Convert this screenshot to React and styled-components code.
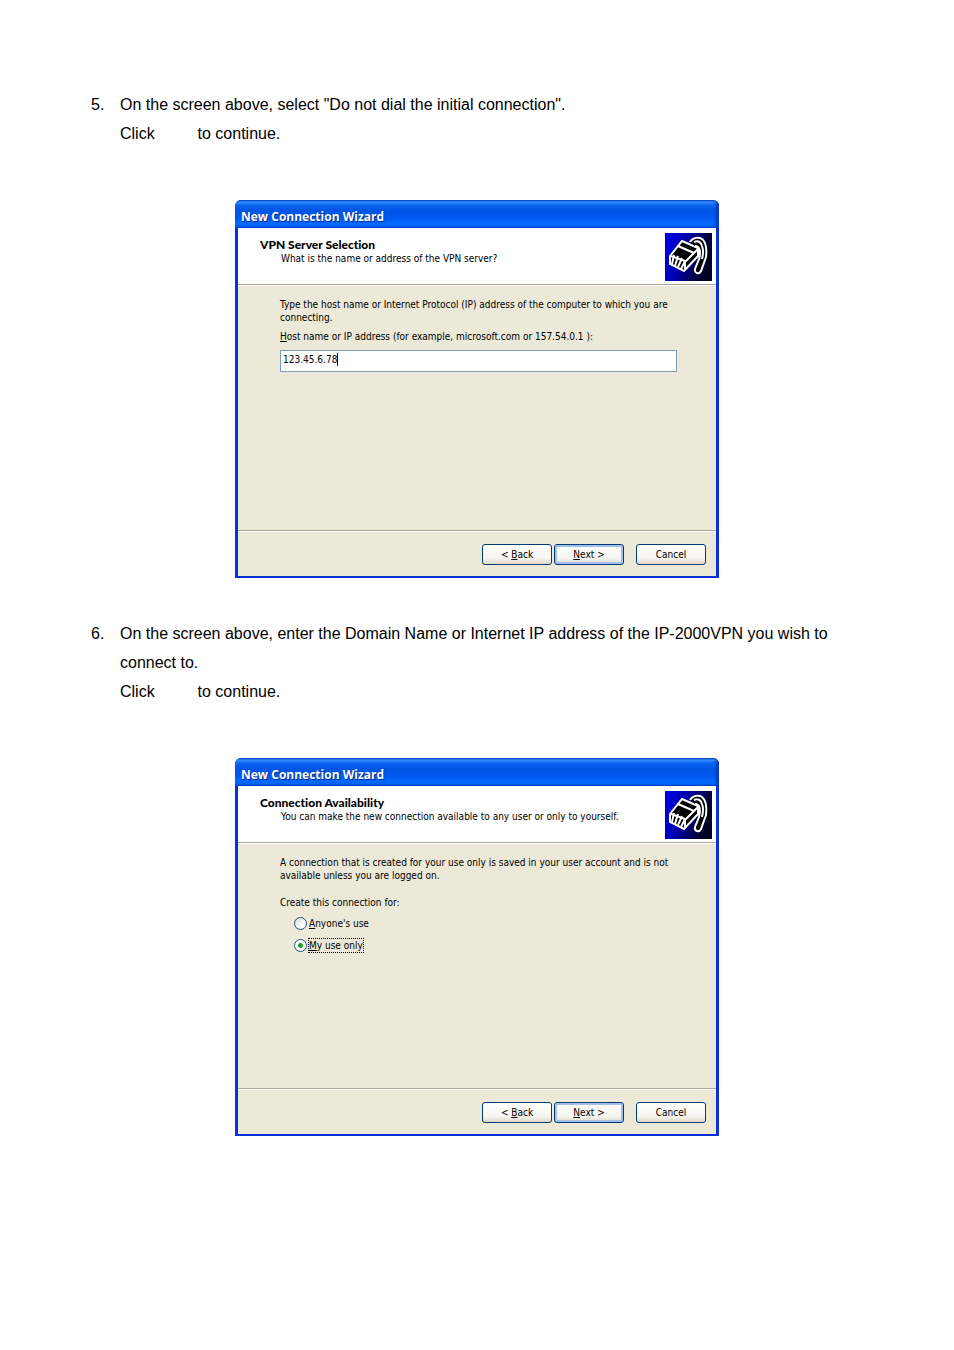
import React from 'react';
import styled, { createGlobalStyle } from 'styled-components';

const GlobalStyle = createGlobalStyle`
  * {
    box-sizing: border-box;
  }

  body {
    margin: 0;
    background: #fff;
    color: #000;
    font-family: "Liberation Sans", Arial, sans-serif;
  }
`;

const Doc = {
  Page: styled.main`
    padding: 90px 91px 200px;
  `,
  Step: styled.section`
    display: grid;
    grid-template-columns: 29px 1fr;
    margin-bottom: 52px;
    font-size: 16px;
    line-height: 29px;
  `,
  Text: styled.p`
    margin: 0;
  `,
  Blank: styled.span`
    display: inline-block;
    width: 34px;
  `,
};

const Dialog = {
  Window: styled.section`
    display: flex;
    flex-direction: column;
    width: 100%;
    max-width: 484px;
    min-height: 378px;
    margin: 0 auto 41px;
    overflow: hidden;
    background: #0831d9;
    border-radius: 6px 6px 0 0;
    font-family: "DejaVu Sans Condensed", "DejaVu Sans", sans-serif;
    font-size: 10px;
    line-height: 13px;
  `,
  Title: styled.h2`
    height: 28px;
    margin: 0;
    padding: 5px 6px 0;
    background: linear-gradient(
      #0a4bc8 0,
      #3a93ff 2px,
      #0a66f0 5px,
      #0055e5 10px,
      #0058ee 18px,
      #0468fd 23px,
      #0566fa 26px,
      #0048c8 28px
    );
    box-shadow: inset -3px 0 3px #0537c0;
    color: #fff;
    font-family: "Open Sans", sans-serif;
    font-size: 12px;
    font-weight: 700;
    line-height: 24px;
    text-shadow: 1px 1px #0a2a86;
  `,
  Content: styled.div`
    display: flex;
    flex: 1;
    flex-direction: column;
    margin: 0 3px 2px;
    background: #ece9d8;
  `,
  Header: styled.header`
    display: flex;
    justify-content: space-between;
    height: 57px;
    padding: 5px 4px 0 22px;
    background: #fff;
    border-bottom: 1px solid #aca899;
  `,
  Heading: styled.h3`
    margin: 5px 0 1px;
    font-family: Lato, sans-serif;
    font-size: 12px;
    font-variant-ligatures: none;
    font-weight: 900;
    line-height: 13px;
  `,
  Subheading: styled.p`
    margin: 0;
    padding-left: 21px;
  `,
  Body: styled.div`
    flex: 1;
    padding: 12px 39px 12px 42px;
    border-top: 1px solid #fff;
  `,
  Text: styled.p`
    margin: 0 0 ${({ $gap }) => $gap}px;
  `,
  Footer: styled.footer`
    display: flex;
    justify-content: flex-end;
    height: 46px;
    padding: 13px 10px 0;
    border-top: 1px solid #aca899;
    box-shadow: inset 0 1px #fff;
  `,
};

const Button = styled.button`
  width: 70px;
  height: 21px;
  margin: 0 0 0 ${({ $gap = 0 }) => $gap}px;
  padding: 0;
  background: linear-gradient(#fff, #f5f4ee 70%, #dcd8cc);
  border: 1px solid #003c74;
  border-radius: 3px;
  box-shadow: ${({ $primary }) => ($primary ? 'inset 0 0 0 2px #a5c0f0' : 'none')};
  color: #000;
  font: inherit;
`;

const Field = {
  Label: styled.label`
    display: block;
    margin-bottom: 7px;
  `,
  Box: styled.div`
    display: flex;
    height: 22px;
    padding: 2px;
    background: #fff;
    border: 1px solid #7f9db9;
  `,
  Input: styled.input`
    field-sizing: content;
    height: 13px;
    padding: 0;
    background: none;
    border: 0;
    outline: 0;
    color: #000;
    font: inherit;
  `,
  Caret: styled.span`
    width: 1px;
    height: 13px;
    background: #000;
  `,
};

const Choice = {
  Group: styled.fieldset`
    min-width: 0;
    margin: 0;
    padding: 0;
    border: 0;
  `,
  Legend: styled.legend`
    margin-bottom: 7px;
    padding: 0;
  `,
  Row: styled.label`
    display: flex;
    align-items: center;
    gap: 2px;
    height: 14px;
    margin: 0 0 8px 14px;
  `,
  Radio: styled.input`
    appearance: none;
    width: 13px;
    height: 13px;
    margin: 0;
    background: linear-gradient(135deg, #dcdcd6, #fff 70%);
    border: 1px solid #1c5180;
    border-radius: 50%;

    &:checked {
      background: radial-gradient(circle, #21a121 2px, #fff 3px);
    }
  `,
  Label: styled.span`
    outline: ${({ $focused }) => ($focused ? '1px dotted #000' : 'none')};
  `,
};

const PlugIcon = () => (
  <svg width="47" height="48" viewBox="0 0 47 48" fill="none" aria-hidden="true">
    <defs>
      <linearGradient id="plug-fade" x2="1" y2="0.3">
        <stop offset="0" stopColor="#0000f0" />
        <stop offset="0.4" stopColor="#0000b8" />
        <stop offset="1" stopColor="#000020" />
      </linearGradient>
      <pattern id="plug-dots" width="2" height="2" patternUnits="userSpaceOnUse">
        <path d="M0 0h1v1H0z" fill="#000020" opacity="0.7" />
      </pattern>
    </defs>
    <path d="M0 0h47v48H0z" fill="url(#plug-fade)" />
    <path d="M0 0h47v48H0z" fill="url(#plug-dots)" />
    <path d="M17 8L33 15L33 23L19 38L5 31V23z" fill="#000" stroke="#fff" strokeWidth="2" />
    <path d="M13 13L29 20M20 29L33 16M6 23L20 28V36" stroke="#fff" strokeWidth="2" />
    <path d="M9 22L7 31M13 23L10 33M17 25L13 34M20 28L16 36" stroke="#fff" strokeWidth="2" />
    <path
      d="M25 9C28 4 34 4 37 6C41 9 42 15 41 24L36 38C34 42 29 40 30 36L34 26C36 19 35 13 30 13"
      fill="#000"
      stroke="#fff"
      strokeWidth="2"
    />
    <path d="M29 9C33 7 36 9 37 13C39 18 38 22 37 26" stroke="#fff" strokeWidth="2" />
  </svg>
);

const Wizard = ({ heading, subheading, children }) => (
  <Dialog.Window>
    <Dialog.Title>New Connection Wizard</Dialog.Title>
    <Dialog.Content>
      <Dialog.Header>
        <div>
          <Dialog.Heading>{heading}</Dialog.Heading>
          <Dialog.Subheading>{subheading}</Dialog.Subheading>
        </div>
        <PlugIcon />
      </Dialog.Header>
      <Dialog.Body>{children}</Dialog.Body>
      <Dialog.Footer>
        <Button type="button">
          {'< '}
          <u>B</u>
          ack
        </Button>
        <Button type="button" $gap={2} $primary>
          <u>N</u>
          {'ext >'}
        </Button>
        <Button type="button" $gap={12}>Cancel</Button>
      </Dialog.Footer>
    </Dialog.Content>
  </Dialog.Window>
);

const App = () => (
  <Doc.Page>
    <GlobalStyle />
    <Doc.Step>
      <span>5.</span>
      <Doc.Text>
        On the screen above, select &quot;Do not dial the initial connection&quot;.
        <br />
        Click
        {' '}
        <Doc.Blank />
        {' '}
        to continue.
      </Doc.Text>
    </Doc.Step>
    <Wizard
      heading="VPN Server Selection"
      subheading="What is the name or address of the VPN server?"
    >
      <Dialog.Text $gap={6}>
        Type the host name or Internet Protocol (IP) address of the computer to which you are
        {' '}
        <br />
        connecting.
      </Dialog.Text>
      <Field.Label htmlFor="host">
        <u>H</u>
        ost name or IP address (for example, microsoft.com or 157.54.0.1 ):
      </Field.Label>
      <Field.Box>
        <Field.Input id="host" type="text" defaultValue="123.45.6.78" />
        <Field.Caret />
      </Field.Box>
    </Wizard>
    <Doc.Step>
      <span>6.</span>
      <Doc.Text>
        On the screen above, enter the Domain Name or Internet IP address of the IP-2000VPN you
        wish to connect to.
        <br />
        Click
        {' '}
        <Doc.Blank />
        {' '}
        to continue.
      </Doc.Text>
    </Doc.Step>
    <Wizard
      heading="Connection Availability"
      subheading="You can make the new connection available to any user or only to yourself."
    >
      <Dialog.Text $gap={14}>
        A connection that is created for your use only is saved in your user account and is not
        {' '}
        <br />
        available unless you are logged on.
      </Dialog.Text>
      <Choice.Group>
        <Choice.Legend>Create this connection for:</Choice.Legend>
        <Choice.Row>
          <Choice.Radio type="radio" name="availability" />
          <Choice.Label>
            <u>A</u>
            nyone&apos;s use
          </Choice.Label>
        </Choice.Row>
        <Choice.Row>
          <Choice.Radio type="radio" name="availability" defaultChecked />
          <Choice.Label $focused>
            <u>M</u>
            y use only
          </Choice.Label>
        </Choice.Row>
      </Choice.Group>
    </Wizard>
  </Doc.Page>
);

export default App;
